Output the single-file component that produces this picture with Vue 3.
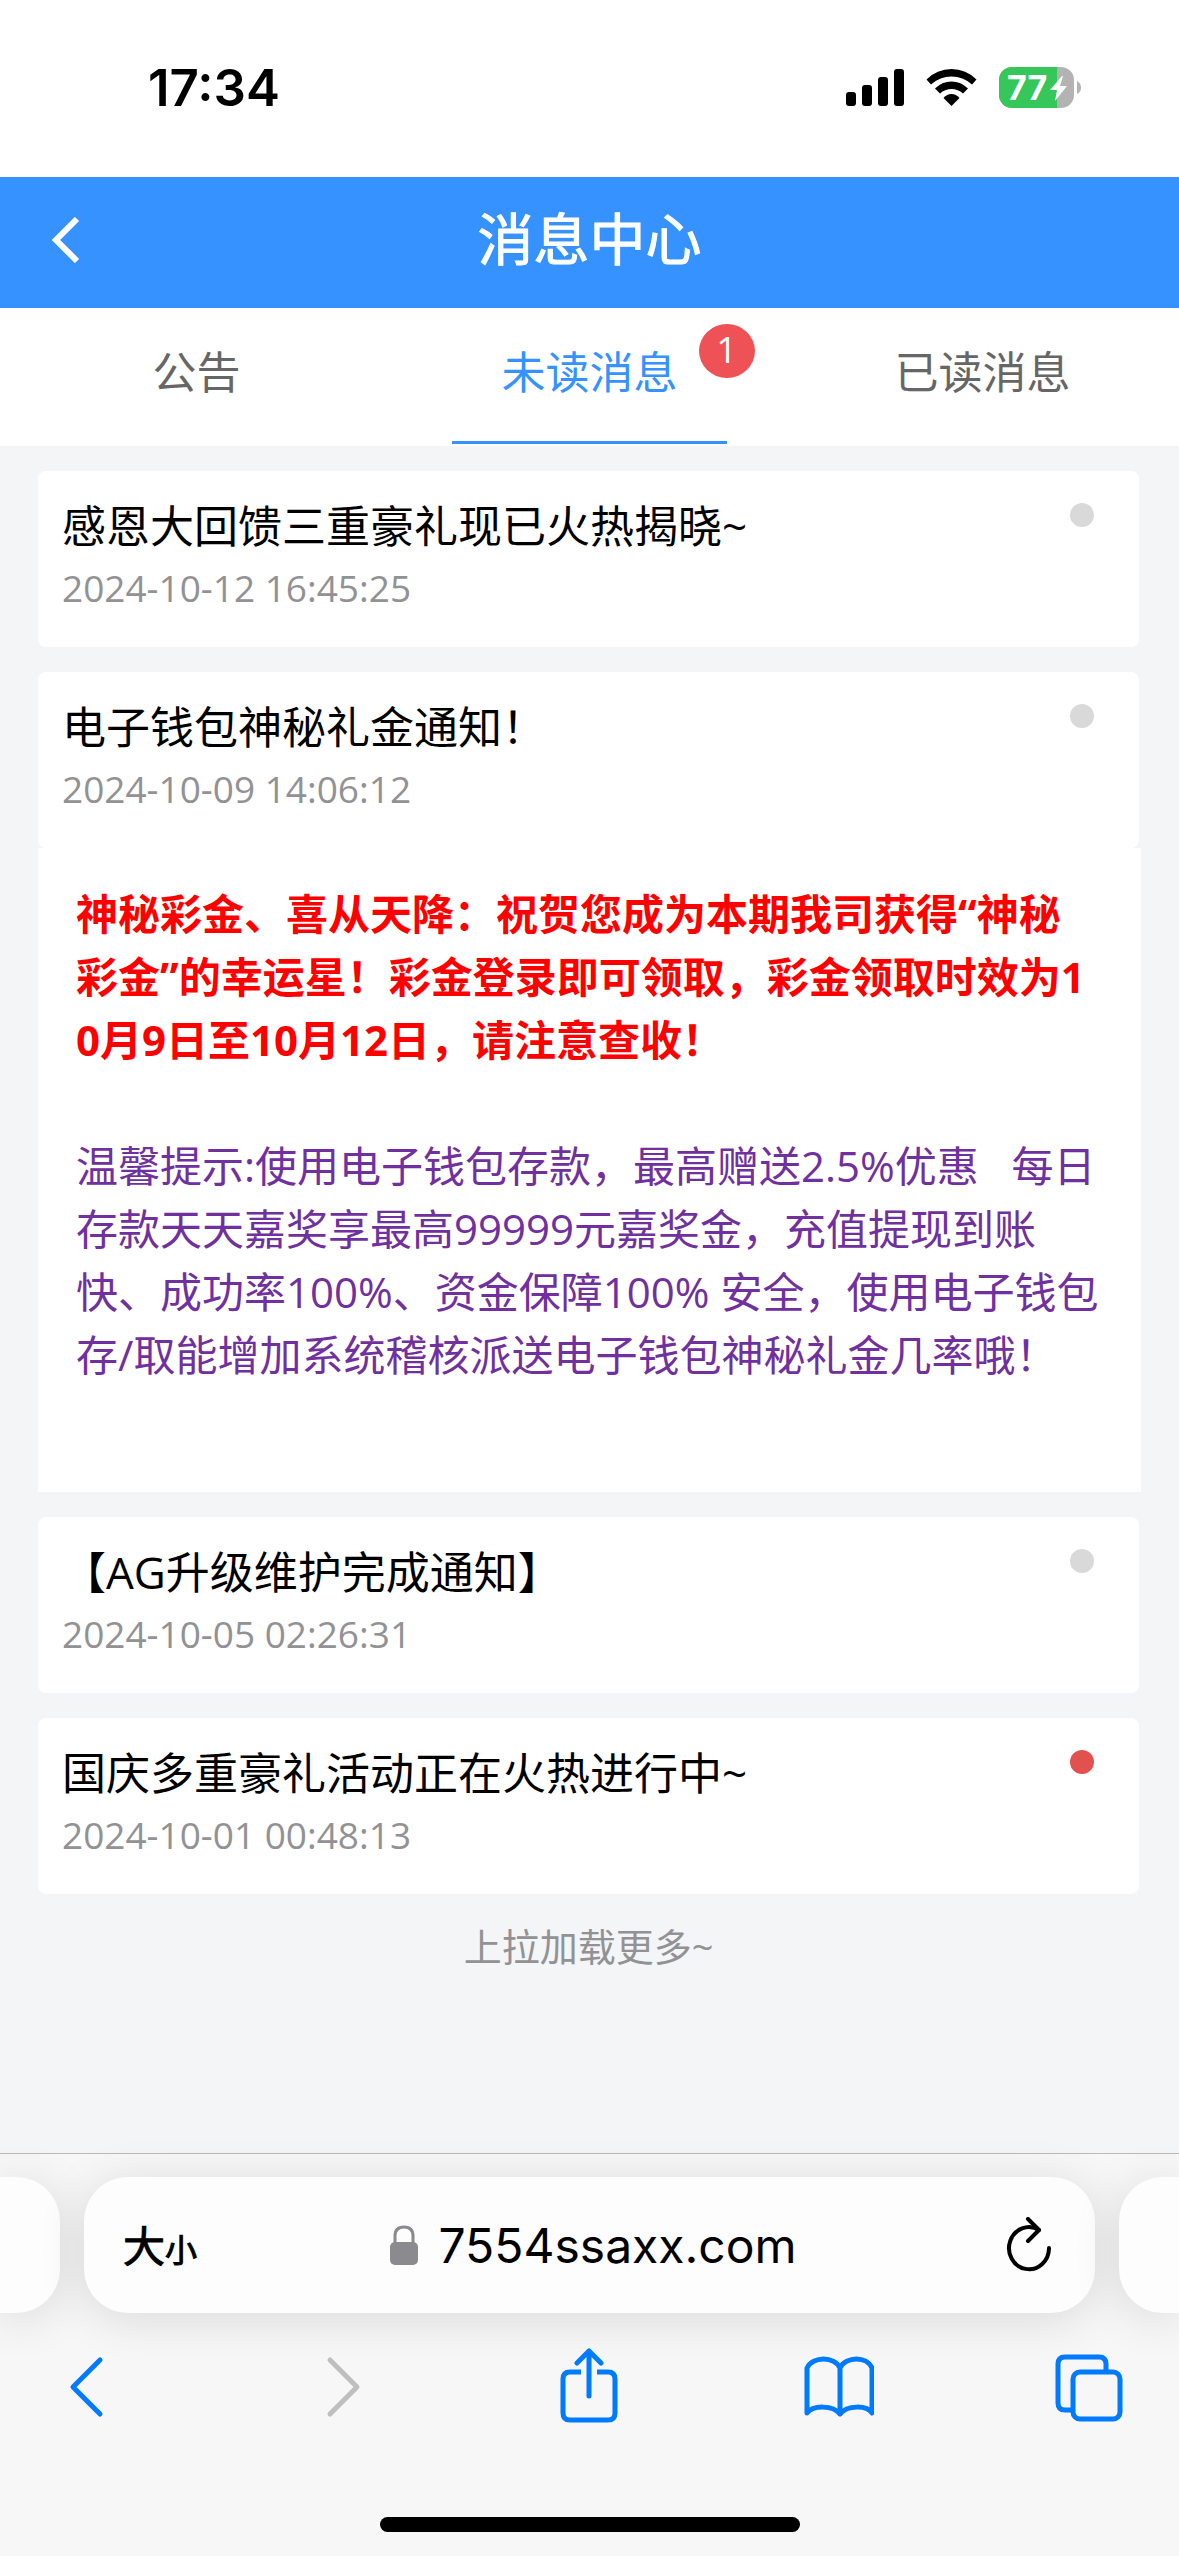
<script setup>
import { ref } from 'vue'

const tabs = [
  { id: 'notice', label: '公告', count: 0 },
  { id: 'unread', label: '未读消息', count: 1 },
  { id: 'read', label: '已读消息', count: 0 },
]
const activeTab = ref('unread')
const openId = ref(2)

const messages = [
  { id: 1, title: '感恩大回馈三重豪礼现已火热揭晓~', time: '2024-10-12 16:45:25', unread: false },
  {
    id: 2,
    title: '电子钱包神秘礼金通知！',
    time: '2024-10-09 14:06:12',
    unread: false,
    lead: '神秘彩金、喜从天降：祝贺您成为本期我司获得“神秘\n彩金”的幸运星！彩金登录即可领取，彩金领取时效为1\n0月9日至10月12日，请注意查收！',
    tip: '温馨提示:使用电子钱包存款，最高赠送2.5%优惠\u00a0\u00a0\u00a0每日\n存款天天嘉奖享最高99999元嘉奖金，充值提现到账\n快、成功率100%、资金保障100% 安全，使用电子钱包\n存/取能增加系统稽核派送电子钱包神秘礼金几率哦！',
  },
  { id: 3, title: '【AG升级维护完成通知】', time: '2024-10-05 02:26:31', unread: false },
  { id: 4, title: '国庆多重豪礼活动正在火热进行中~', time: '2024-10-01 00:48:13', unread: true },
]

function toggle(id) {
  openId.value = openId.value === id ? 0 : id
}
</script>

<template>
  <div class="page">
    <div class="status">
      <span class="clock">17:34</span>
      <div class="indicators">
        <svg width="58" height="37" viewBox="0 0 58 37" aria-hidden="true">
          <rect x="0" y="23" width="10" height="14" rx="3" />
          <rect x="16" y="16" width="10" height="21" rx="3" />
          <rect x="32" y="8" width="10" height="29" rx="3" />
          <rect x="48" y="0" width="10" height="37" rx="3" />
        </svg>
        <svg class="wifi" width="51" height="37" viewBox="0 0 51 37" aria-hidden="true">
          <path d="M0.5 10.500Q11 0 25.500 0T50.500 10.500L46 15.500Q37 7.500 25.500 7.500T5 15.500Z" />
          <path d="M9 19.500Q16 12.500 25.500 12.500T42 19.500L37 24.500Q32 20 25.500 20T14 24.500Z" />
          <path d="M17.500 29Q21 25 25.500 25T33.500 29L25.500 37Z" />
        </svg>
        <div class="battery">
          <svg width="82" height="41" viewBox="0 0 82 41" aria-hidden="true">
            <clipPath id="cell"><rect width="75" height="41" rx="13" /></clipPath>
            <g clip-path="url(#cell)">
              <rect width="75" height="41" fill="#b3b3b3" />
              <rect width="58" height="41" fill="#35c759" />
            </g>
            <path d="M78 14Q82 16 82 20.500T78 27Z" fill="#b3b3b3" />
            <path d="M63 9L51 23H58L56 34L68 19H61L64 9Z" fill="#fff" />
          </svg>
          <span class="level">77</span>
        </div>
      </div>
    </div>

    <header class="topbar">
      <button class="back" type="button" aria-label="返回">
        <svg width="28" height="46" viewBox="0 0 28 46" fill="none" stroke="#fff" stroke-width="6">
          <path d="M25 2L4 23L25 44" />
        </svg>
      </button>
      <h1>消息中心</h1>
    </header>

    <nav class="tabs">
      <button
        v-for="tab in tabs"
        :key="tab.id"
        type="button"
        class="tab"
        :class="{ active: tab.id === activeTab }"
        @click="activeTab = tab.id"
      >
        <span class="tab-label">{{ tab.label }}<span v-if="tab.count" class="badge">{{ tab.count }}</span></span>
      </button>
    </nav>

    <main class="list">
      <article v-for="msg in messages" :key="msg.id">
        <button class="card" type="button" @click="toggle(msg.id)">
          <span class="summary">
            <span class="title">{{ msg.title }}</span>
            <span class="time">{{ msg.time }}</span>
          </span>
          <span class="dot" :class="{ unread: msg.unread }"></span>
        </button>
        <div v-if="msg.lead && openId === msg.id" class="body">
          <p class="lead">{{ msg.lead }}</p>
          <p class="tip">{{ msg.tip }}</p>
        </div>
      </article>
      <p class="more">上拉加载更多~</p>
    </main>

    <footer class="browser">
      <div class="address-row">
        <div class="pill side left"></div>
        <div class="pill address">
          <button class="text-size" type="button" aria-label="大小"><span>大</span><small>小</small></button>
          <button class="url" type="button">
            <svg width="28" height="40" viewBox="0 0 28 40" aria-hidden="true">
              <path d="M5 19V11C5 5 8.500 2 14 2S23 5 23 11V19" fill="none" stroke="#8a8a8f" stroke-width="3" />
              <rect y="17" width="28" height="23" rx="5" fill="#8a8a8f" />
            </svg>
            <span>7554ssaxx.com</span>
          </button>
          <button class="reload" type="button" aria-label="重新加载">
            <svg width="46" height="56" viewBox="0 0 46 56" fill="none" stroke="#000" stroke-width="4" stroke-linecap="round" stroke-linejoin="round">
              <path d="M43 31A20 21 0 1 1 33 13" />
              <path d="M22 2L33 13L22 24" />
            </svg>
          </button>
        </div>
        <div class="pill side right"></div>
      </div>

      <div class="toolbar">
        <button type="button" aria-label="后退">
          <svg width="72" height="76" viewBox="0 0 72 76"><path d="M50 12L23 39L50 66" /></svg>
        </button>
        <button type="button" aria-label="前进" class="disabled" disabled>
          <svg width="72" height="76" viewBox="0 0 72 76"><path d="M29 12L56 39L29 66" /></svg>
        </button>
        <button type="button" aria-label="分享">
          <svg width="72" height="76" viewBox="0 0 72 76">
            <path d="M29 24H18Q11 24 11 31V65Q11 72 18 72H56Q63 72 63 65V31Q63 24 56 24H45" stroke-linecap="butt" />
            <path d="M37 48V3M25 15L37 3L49 15" />
          </svg>
        </button>
        <button type="button" aria-label="书签">
          <svg width="72" height="76" viewBox="0 0 72 76">
            <path d="M38 20C32 8 11 8 5 20V65C11 57 31 57 38 66C45 57 65 57 70 65V20C65 8 44 8 38 20V66" />
          </svg>
        </button>
        <button type="button" aria-label="标签页">
          <svg width="72" height="76" viewBox="0 0 72 76">
            <path d="M53 23V16Q53 9 46 9H12Q5 9 5 16V55Q5 62 12 62H20" stroke-linecap="butt" />
            <rect x="20" y="24" width="47" height="47" rx="7" />
          </svg>
        </button>
      </div>
      <div class="home"></div>
    </footer>
  </div>
</template>

<style>
body {
  margin: 0;
}
</style>

<style scoped>
.page {
  min-height: 100vh;
  display: flex;
  flex-direction: column;
  overflow: hidden;
  background: #f4f5f7;
  color: #000;
  font-family: "Open Sans", "Noto Sans CJK SC", sans-serif;
}

button {
  margin: 0;
  padding: 0;
  border: 0;
  background: none;
  color: inherit;
  font: inherit;
}

svg {
  display: block;
}

h1,
p {
  margin: 0;
}

.status {
  display: flex;
  align-items: center;
  justify-content: space-between;
  height: 177px;
  padding: 0 98px 2px 148px;
  box-sizing: border-box;
  background: #fff;
  font-family: Inter, sans-serif;
}

.clock {
  font-size: 51px;
  font-weight: 600;
}

.indicators {
  display: flex;
  align-items: center;
  gap: 22px;
}

.battery {
  position: relative;
}

.level {
  position: absolute;
  left: 8px;
  top: 0;
  color: #fff;
  font-size: 34px;
  font-weight: 700;
  line-height: 41px;
}

.topbar {
  display: flex;
  align-items: center;
  height: 131px;
  padding: 0 52px 6px;
  box-sizing: border-box;
  background: #3692ff;
  color: #fff;
}

.back {
  width: 60px;
}

h1 {
  flex: 1;
  margin-right: 60px;
  padding-bottom: 4px;
  text-align: center;
  font-size: 56px;
  font-weight: 400;
  line-height: 80px;
  -webkit-text-stroke: 1px currentColor;
}

.tabs {
  display: flex;
  height: 138px;
  background: #fff;
}

.tab {
  flex: 1;
  display: flex;
  flex-direction: column;
  align-items: center;
  padding-top: 32px;
  color: #666;
  font-size: 44px;
  line-height: 64px;
}

.tab.active {
  color: #3692ff;
}

.tab.active::after {
  content: "";
  width: 70%;
  height: 3px;
  margin-top: 37px;
  background: #3692ff;
}

.tab-label {
  position: relative;
}

.badge {
  position: absolute;
  left: 100%;
  top: -16px;
  width: 56px;
  height: 54px;
  margin-left: 21px;
  border-radius: 50%;
  background: #ee5156;
  color: #fff;
  font-size: 36px;
  line-height: 52px;
  text-align: center;
}

.list {
  flex: 1;
  display: flex;
  flex-direction: column;
  gap: 25px;
  padding: 25px 40px 0 38px;
}

.card {
  display: flex;
  align-items: flex-start;
  justify-content: space-between;
  width: 100%;
  padding: 25px 45px 33px 24px;
  border-radius: 8px;
  background: #fff;
  text-align: left;
}

.summary {
  display: flex;
  flex-direction: column;
  gap: 6px;
}

.title {
  font-size: 44px;
  line-height: 60px;
}

.time {
  color: #929295;
  font-size: 37px;
  line-height: 52px;
}

.dot {
  width: 24px;
  height: 24px;
  margin-top: 7px;
  border-radius: 50%;
  background: #d9d9d9;
}

.dot.unread {
  background: #e2514d;
}

.body {
  margin-right: -2px;
  padding: 34px 38px 106px;
  background: #fff;
  font-size: 42px;
  line-height: 63px;
  white-space: pre;
}

.lead {
  margin-bottom: 63px;
  color: #f00;
  font-weight: 700;
}

.tip {
  color: #7030a0;
}

.more {
  color: #929295;
  font-size: 38px;
  line-height: 54px;
  text-align: center;
}

.browser {
  border-top: 1px solid #bababc;
  background: #f7f7f7;
}

.address-row {
  display: flex;
  gap: 24px;
  padding-top: 23px;
}

.pill {
  height: 136px;
  border-radius: 44px;
  background: #fdfdfd;
  box-shadow: 0 6px 48px rgba(0, 0, 0, 0.12);
}

.side {
  width: 60px;
}

.left {
  border-radius: 0 44px 44px 0;
}

.right {
  border-radius: 44px 0 0 44px;
}

.address {
  flex: 1;
  display: flex;
  align-items: center;
  justify-content: space-between;
  padding: 0 43px 0 39px;
}

.text-size {
  display: flex;
  align-items: baseline;
  padding-bottom: 4px;
  font-size: 42px;
  -webkit-text-stroke: 1px currentColor;
}

.text-size small {
  font-size: 32px;
}

.url {
  display: flex;
  align-items: center;
  gap: 20px;
  margin-right: 16px;
  font-family: Inter, sans-serif;
  font-size: 48px;
}

.toolbar {
  display: flex;
  justify-content: space-between;
  padding: 35px 54px 0 50px;
}

.toolbar svg {
  fill: none;
  stroke: #007aff;
  stroke-width: 5;
  stroke-linecap: round;
  stroke-linejoin: round;
}

.toolbar .disabled svg {
  stroke: #bfbfbf;
}

.home {
  width: 420px;
  height: 15px;
  margin: 93px auto 24px;
  border-radius: 8px;
  background: #000;
}
</style>
